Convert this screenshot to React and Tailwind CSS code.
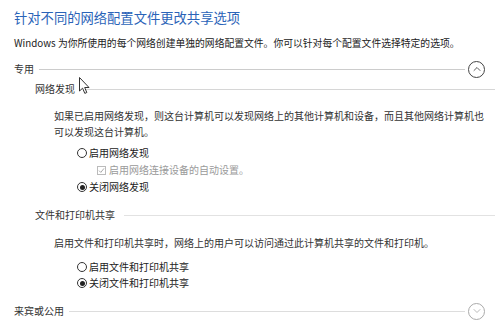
import { ChevronUp, ChevronDown } from "lucide-react";

const font = { fontFamily: '"Noto Sans CJK SC", "Liberation Sans", sans-serif' };

const Radio = ({ checked, label }) => (
	<div className="flex items-center h-4 ml-[77px] gap-[2px]">
		<span className="w-[10px] h-[10px] rounded-full border border-[#333] flex items-center justify-center bg-white">
			{checked && <span className="w-[5px] h-[5px] rounded-full bg-[#222]" />}
		</span>
		<span className="text-[10px] text-[#222] leading-none">{label}</span>
	</div>
);

const SectionHeader = ({ label, muted, open }) => (
	<div className="flex items-center h-[18px] pl-[14px] pr-[10px]">
		<span className="text-[10px] text-[#333] leading-none whitespace-nowrap">{label}</span>
		<div className={`flex-1 h-px ml-[5px] mr-[3px] ${muted ? "bg-[#ddd]" : "bg-[#ccc]"}`} />
		<span
			className={`w-[17px] h-[17px] rounded-full border flex items-center justify-center ${
				muted ? "border-[#aaa] text-[#aaa]" : "border-[#444] text-[#333]"
			}`}
		>
			{open ? <ChevronUp size={12} strokeWidth={1.6} /> : <ChevronDown size={12} strokeWidth={1.6} />}
		</span>
	</div>
);

const SubHeader = ({ label, muted }) => (
	<div className="flex items-center h-[14px] pl-[35px]">
		<span className="text-[10px] text-[#333] leading-none whitespace-nowrap">{label}</span>
		<div className={`flex-1 h-px ml-[9px] ${muted ? "bg-[#e2e2e2]" : "bg-[#d6d6d6]"}`} />
	</div>
);

export default function App() {
	return (
		<main style={font} className="relative w-[495px] h-[330px] bg-white overflow-hidden">
			{/* Heading */}
			<h1 className="pt-[8px] pl-[14px] h-[28px] text-[13.3px] leading-[20px] text-[#2a63b8] font-normal whitespace-nowrap">
				针对不同的网络配置文件更改共享选项
			</h1>
			<p className="mt-[8px] pl-[14px] h-[14px] text-[9.8px] leading-[14px] text-[#222] whitespace-nowrap">
				Windows 为你所使用的每个网络创建单独的网络配置文件。你可以针对每个配置文件选择特定的选项。
			</p>

			{/* 专用 */}
			<div className="mt-[10px]">
				<SectionHeader label="专用" open />
			</div>
			<div className="mt-[4px]">
				<SubHeader label="网络发现" />
			</div>
			<p className="mt-[12px] ml-[54px] text-[10px] leading-[16px] text-[#333] whitespace-nowrap">
				如果已启用网络发现，则这台计算机可以发现网络上的其他计算机和设备，而且其他网络计算机也
				<br />
				可以发现这台计算机。
			</p>
			<div className="mt-[5px] flex flex-col gap-px">
				<Radio label="启用网络发现" />
				<div className="flex items-center h-4 ml-[97px] gap-[3px]">
					<span className="w-[9px] h-[9px] border border-[#bbb] flex items-center justify-center">
						<svg width="7" height="7" viewBox="0 0 7 7">
							<path d="M1 3.6 L2.8 5.4 L6 1.4" fill="none" stroke="#aaa" strokeWidth="1" />
						</svg>
					</span>
					<span className="text-[10px] text-[#9a9a9a] leading-none">启用网络连接设备的自动设置。</span>
				</div>
				<Radio label="关闭网络发现" checked />
			</div>

			<div className="mt-[13px]">
				<SubHeader label="文件和打印机共享" muted />
			</div>
			<p className="mt-[13px] ml-[54px] text-[10px] leading-[16px] text-[#333] whitespace-nowrap">
				启用文件和打印机共享时，网络上的用户可以访问通过此计算机共享的文件和打印机。
			</p>
			<div className="mt-[8px] flex flex-col">
				<Radio label="启用文件和打印机共享" />
				<Radio label="关闭文件和打印机共享" checked />
			</div>

			{/* 来宾或公用 */}
			<div className="mt-[11px]">
				<SectionHeader label="来宾或公用" muted />
			</div>

			{/* mouse pointer */}
			<svg className="absolute left-[79px] top-[77px]" width="12" height="18" viewBox="0 0 12 18">
				<path
					d="M0.5 0.5 L0.5 14 L3.6 11.2 L5.8 16.4 L7.8 15.5 L5.7 10.5 L10 10.5 Z"
					fill="#fff"
					stroke="#333"
					strokeWidth="1"
					strokeLinejoin="round"
				/>
			</svg>
		</main>
	);
}
